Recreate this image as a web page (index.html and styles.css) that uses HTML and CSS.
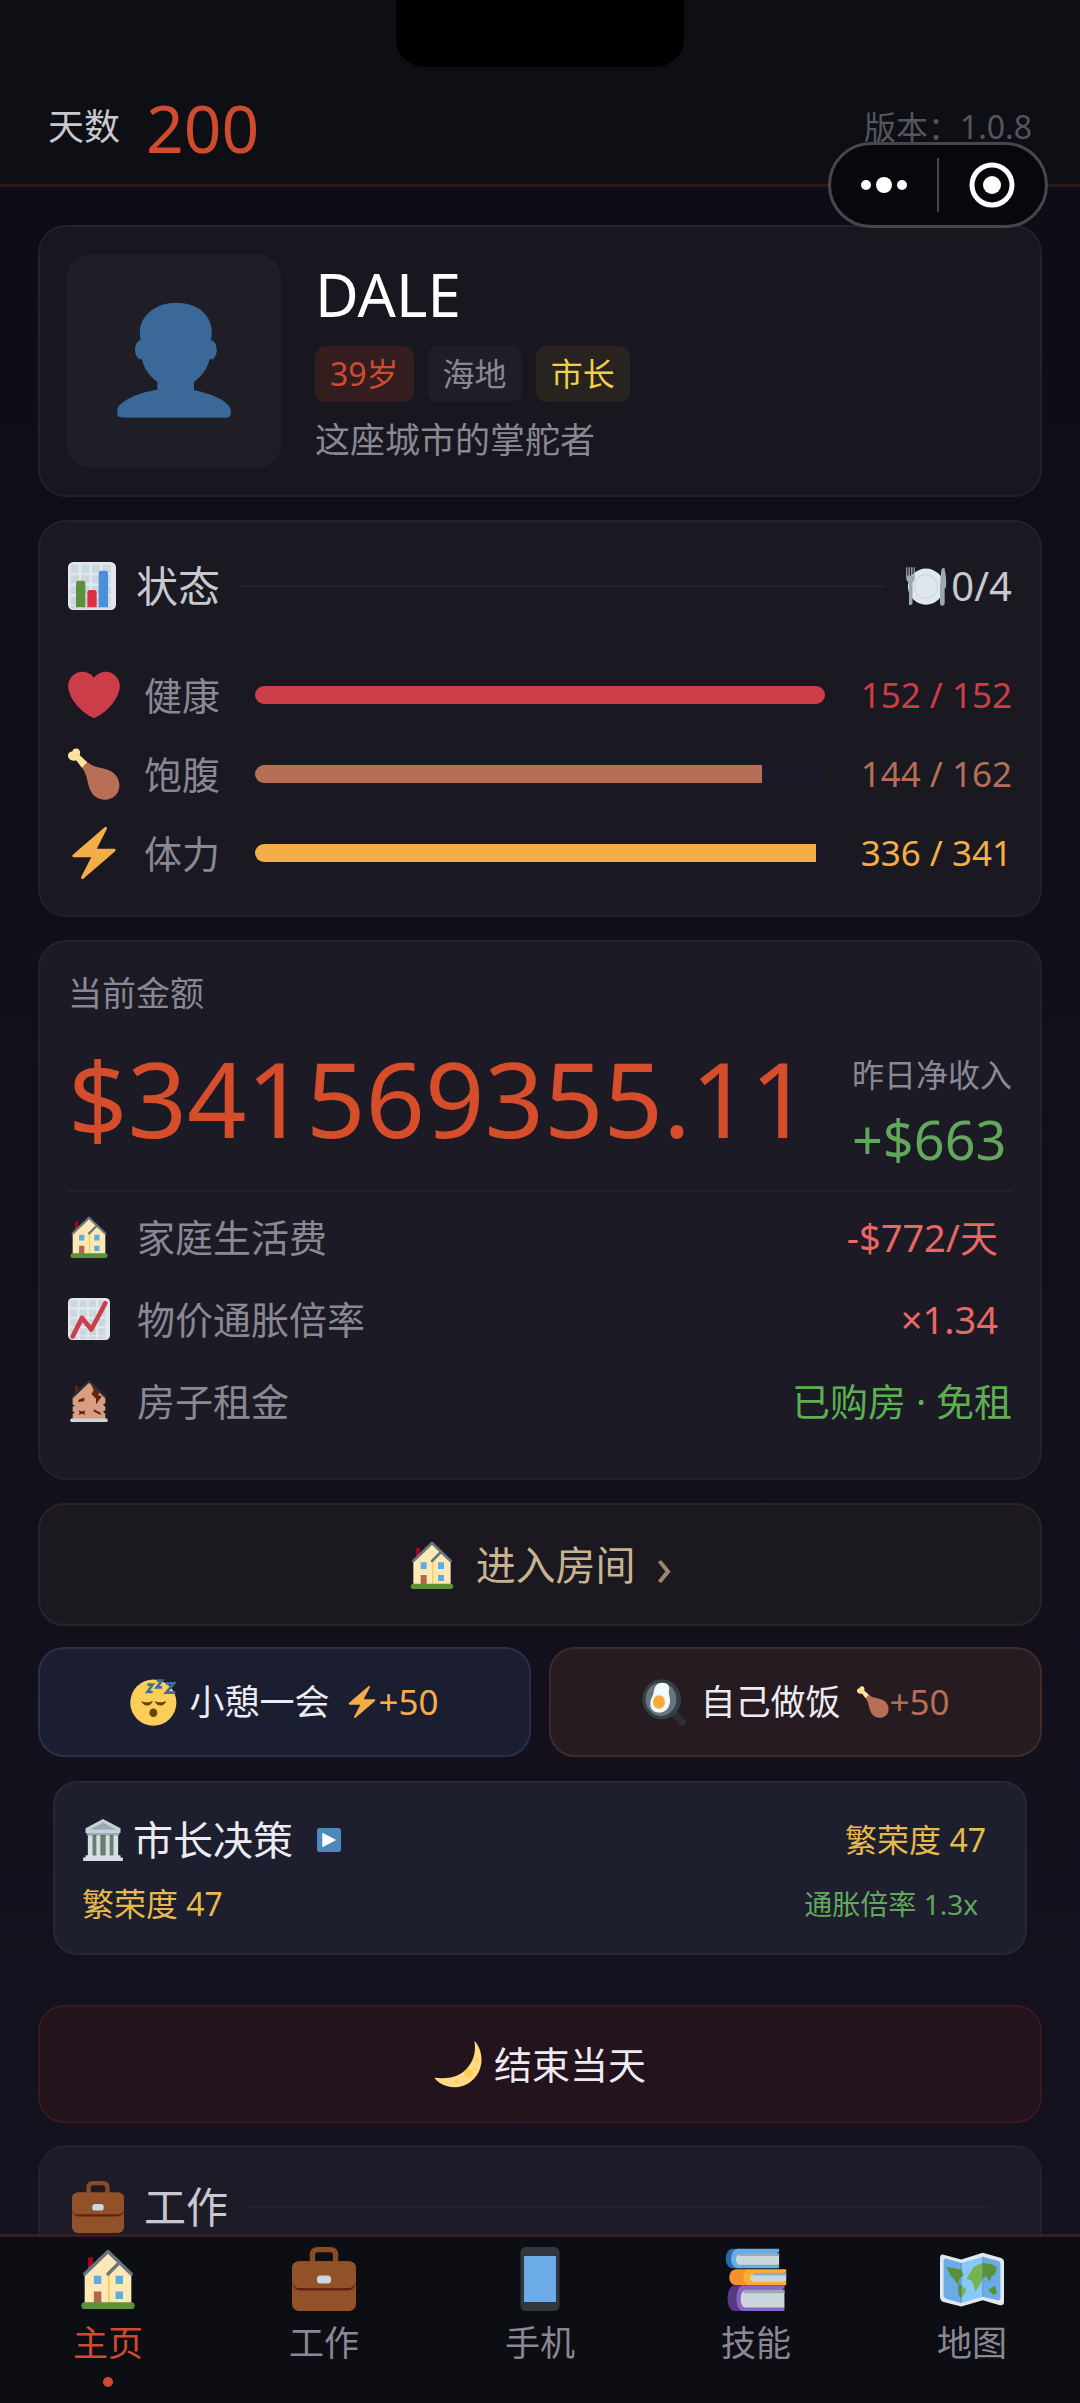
FILE: index.html
```
<!DOCTYPE html>
<html lang="zh-CN">
<head>
  <meta charset="UTF-8" />
  <meta name="viewport" content="width=device-width, initial-scale=1.0"/>
  <title>主页</title>
  <link rel="stylesheet" href="styles.css">
</head>
<body>
  <!-- shared icons -->
  <svg class="sprite" aria-hidden="true">
    <defs>
      <symbol id="i-user" viewBox="0 0 36 36">
        <path fill="#3a6898" d="M24 26.799v-2.566c2-1.348 4.08-3.779 4.703-6.896.186.103.206.17.413.17.991 0 1.709-1.287 1.709-2.873 0-1.562-.823-2.827-1.794-2.865.187-.674.293-1.577.293-2.735C29.324 5.168 26 .527 18.541.527c-6.629 0-10.777 4.641-10.777 8.507 0 1.123.069 2.043.188 2.755-.911.137-1.629 1.352-1.629 2.845 0 1.587.804 2.873 1.796 2.873.206 0 .025-.067.209-.17C8.952 20.453 11 22.885 13 24.232v2.414c-5 .645-12 3.437-12 6.23v1.061C1 35 2.076 35 3.137 35h29.725C33.924 35 35 35 35 33.938v-1.061c0-2.615-6-5.225-11-6.078z"/>
      </symbol>
      <symbol id="i-grid" viewBox="0 0 36 36">
        <rect width="36" height="36" rx="4" fill="#e1e8ed"/>
        <path stroke="#ccd6dd" stroke-width="6" stroke-dasharray="6 2" d="M2 5h32M2 13h32M2 21h32M2 29h32"/>
        <path stroke="#ccd6dd" stroke-width="2" stroke-dasharray="6 2" d="M2 34h32"/>
      </symbol>
      <symbol id="i-bars" viewBox="0 0 36 36">
        <use href="#i-grid"/>
        <path fill="#5c913b" d="M13 34H6V16a2 2 0 0 1 2-2h3a2 2 0 0 1 2 2z"/>
        <path fill="#dd2e44" d="M21.500 34h-7V23a2 2 0 0 1 2-2h3a2 2 0 0 1 2 2z"/>
        <path fill="#4a90d9" d="M30 34h-7V8.500a2 2 0 0 1 2-2h3a2 2 0 0 1 2 2z"/>
      </symbol>
      <symbol id="i-trend" viewBox="0 0 36 36">
        <use href="#i-grid"/>
        <path fill="none" stroke="#c9404c" stroke-width="4" stroke-linecap="round" stroke-linejoin="round" d="M4 33l8-16 8 10L32 4.500"/>
      </symbol>
      <symbol id="i-heart" viewBox="0 0 36 36">
        <path fill="#cb3e49" d="M35.885 11.833c0-5.450-4.418-9.868-9.867-9.868-3.308 0-6.227 1.633-8.018 4.129-1.791-2.496-4.710-4.129-8.017-4.129-5.450 0-9.868 4.417-9.868 9.868 0 .772.098 1.520.266 2.241C1.751 22.587 11.216 31.568 18 34.034c6.783-2.466 16.249-11.447 17.617-19.959.17-.721.268-1.469.268-2.242z"/>
      </symbol>
      <symbol id="i-leg" viewBox="0 0 36 36">
        <path fill="#b96f57" d="M9.500 13.500l3.500-4c4 3.500 9 4 13 5 7 2 10 7 9.500 12.500-.5 5.500-5 9-10.500 8.800-5.500-.3-9-4-10.500-9-1.200-4-1.500-9-5-13.300z"/>
        <path fill="#ffe1a0" d="M13.300 9.800l-3.700 3.900-4-5.300C3 9.500.2 8 0 5.600-.2 3.500 1.500 2.300 3 2.400 3.200.6 5 0 6.300.4c2.200.7 2.500 3 1.700 4.500z"/>
      </symbol>
      <symbol id="i-bolt" viewBox="0 0 36 36">
        <path fill="#f3ae48" d="M32.938 15.651C32.792 15.260 32.418 15 32 15H19.925L26.890 1.458c.219-.426.106-.947-.271-1.243C26.437.071 26.218 0 26 0c-.233 0-.466.082-.653.243L18 6.588 3.347 19.243c-.316.273-.43.714-.284 1.105S3.582 21 4 21h12.075L9.110 34.542c-.219.426-.106.947.271 1.243.182.144.401.215.619.215.233 0 .466-.082.653-.243L18 29.412l14.653-12.655c.317-.273.43-.714.285-1.106z"/>
      </symbol>
      <symbol id="i-plate" viewBox="0 0 36 36">
        <circle cx="18" cy="18.500" r="15.500" fill="#e1e8ed"/>
        <circle cx="18" cy="18.500" r="10" fill="none" stroke="#ccd6dd"/>
        <path fill="#99aab5" d="M1 2h1v7h1V2h1.200v7h1V2h1.200v7h1V2h1v9c0 2-1 3.500-2 4v18a2 2 0 0 1-3 1V15c-1.400-.5-2.400-2-2.400-4zM31 5c0-2 3-4 3-1.500C35 9 36 14 35 20h-1v13a2 2 0 0 1-4 0V18z"/>
      </symbol>
      <symbol id="i-house" viewBox="0 0 36 36">
        <path fill="#a0041e" d="M6 5h3v8H6z"/>
        <path fill="#ffe8b6" d="M4 15L18 1l14 14v18H4z"/>
        <path fill="#ffcc4d" d="M18 15h1v18h-1z"/>
        <path fill="none" stroke="#66757f" stroke-width="2" stroke-linecap="round" stroke-linejoin="round" d="M4 15L18 1.500 32 15M18 15l6-6"/>
        <path fill="#5dade2" d="M9.500 16H14v5H9.500zM22.500 16H27v5h-4.500zM22.500 25.500H27v4.500h-4.500z"/>
        <path fill="#b0664c" d="M9.500 25.500H14V33H9.500z"/>
        <rect x="2" y="32" width="32" height="4" rx="2" fill="#5c913b"/>
      </symbol>
      <symbol id="i-ruin" viewBox="0 0 36 36">
        <path fill="#662113" d="M6 5h3v8H6z"/>
        <path fill="#d99e82" d="M4 15L18 1l14 14v5l-2 1 2 2v3l-2 1 2 2v5H4v-5l2-1-2-1v-4l2-1-2-1z"/>
        <path fill="none" stroke="#292f33" stroke-width="2" d="M3.500 15L18 1l14.500 14"/>
        <path fill="#662113" d="M20 4l7 6-1 3 3 1-5 7v-5l-4-4 2-3zM9 17l5-2v3l-5 1zM22 25l6 3v2l-6-3zM9 26l3 1 3-1-1 2 1 2-3-1-3 1 1-2z"/>
        <rect x="2" y="33" width="32" height="3" rx="1" fill="#ccd6dd"/>
      </symbol>
      <symbol id="i-sleep" viewBox="0 0 36 36">
        <circle cx="17.500" cy="18.500" r="17.300" fill="#fbce5a"/>
        <path fill="#664500" d="M8.500 17c2 1.500 6 1.500 8.500 0-.5 4.500-7.500 5-8.500 0zM18.500 17c2 1.500 6 1.500 8.500 0-.5 4.500-7.500 5-8.500 0z"/>
        <ellipse cx="17.500" cy="26" rx="3" ry="3.200" fill="#664500"/>
        <g fill="none" stroke="#3b6fa3" stroke-width="2">
          <path d="M13 5h4l-4 5.500h4M20 2h4l-4 5h4M27 4h6l-6 7h7"/>
        </g>
      </symbol>
      <symbol id="i-pan" viewBox="0 0 36 36">
        <path stroke="#292f33" stroke-width="5.500" stroke-linecap="round" d="M24 26l7 7"/>
        <ellipse cx="15.500" cy="16" rx="14.500" ry="15" fill="#343f46"/>
        <ellipse cx="15" cy="16" rx="11.500" ry="12.500" fill="#66757f"/>
        <path fill="#f5f8fa" d="M16 3.500c4 0 6 2.500 5 6-.7 3 1 4 .8 8-.3 5-3.500 8.500-7.800 8.500-4.500 0-7.500-3-7-7.500.3-3 2-4.500 2.500-8 .5-4 2.500-7 6.500-7z"/>
        <ellipse cx="13.500" cy="18" rx="4.500" ry="5" fill="#f4a93a"/>
      </symbol>
      <symbol id="i-bank" viewBox="0 0 36 36">
        <path fill="#c5d0d8" d="M18 0l15 8v4H3V8z"/>
        <path fill="#99aab5" d="M18 3l11 6H7zM4 12h28v2H4z"/>
        <path fill="#6b7d6f" d="M6 14h24v17H6z"/>
        <path fill="#d6dfe5" d="M5 14h4v17H5zM12.300 14h3.400v17h-3.400zM20.300 14h3.400v17h-3.400zM27 14h4v17h-4zM3 31h30v2H3zM1 33h34v3H1z"/>
      </symbol>
      <symbol id="i-play" viewBox="0 0 36 36">
        <rect width="36" height="36" rx="4" fill="#4f88bd"/>
        <path fill="#fff" d="M8 7l21 11L8 29z"/>
      </symbol>
      <symbol id="i-moon" viewBox="0 0 36 36">
        <path fill="#ffd983" d="M30.300.5c5.300 5.600 7.200 15.500 3.200 23.500C29 33 19 37.500 10 34.700 5.500 33.300 2 31 .2 28.300c9.800 1.200 18.800-.3 24.800-7.300 5.200-6 6.500-13 5.300-20.500z"/>
        <g fill="#ffcc4d"><circle cx="26" cy="25" r="3"/><circle cx="32" cy="15" r="1.500"/><circle cx="17" cy="31" r="1.500"/><circle cx="31" cy="22" r="1"/></g>
      </symbol>
      <symbol id="i-case" viewBox="0 0 36 36">
        <path fill="none" stroke="#8a4b23" stroke-width="3" d="M11.500 9V4.500c0-2 1-3 3-3h7c2 0 3 1 3 3V9"/>
        <rect y="8" width="36" height="28" rx="4" fill="#915129"/>
        <path fill="#662113" d="M0 19.500C0 22.500 2 24.500 5 24.500h26c3 0 5-2 5-5V18H0z"/>
        <path fill="#915129" d="M4 8h28a4 4 0 0 1 4 4v7c0 2.500-2 4-4 4H4c-2.500 0-4-1.500-4-4v-7a4 4 0 0 1 4-4z"/>
        <rect x="14" y="16" width="8" height="4.500" rx="2" fill="#ccd6dd"/>
      </symbol>
      <symbol id="i-phone" viewBox="0 0 36 36">
        <rect x="7" width="22" height="36" rx="3" fill="#31373d"/>
        <path fill="#6aabe8" d="M9 5h18v26H9z"/>
      </symbol>
      <symbol id="i-books" viewBox="0 0 36 36">
        <path fill="#2a6aa8" d="M5 1h4v11H5C2.500 12 1 9.500 1 6.500S2.500 1 5 1z"/>
        <path fill="#65aeea" d="M8 1h23v2h-1v7h1v2H8c-2.500 0-4-2.500-4-5.500S5.500 1 8 1z"/>
        <path fill="#ccd6dd" d="M9 4h22v6H9c-3 0-3-6 0-6z"/>
        <path fill="#9aaab4" d="M9 3.500h22V5H8z"/>
        <path fill="#f4912d" d="M7 12.500h7v9H7c-2.500 0-4-2-4-4.500s1.500-4.500 4-4.500z"/>
        <path fill="#ffac33" d="M14 12.500h21v2h-1v5h1v2H14c-4 0-4-9 0-9z"/>
        <path fill="#ccd6dd" d="M17 15h18v4.500H17c-3 0-3-4.500 0-4.500z"/>
        <path fill="#9aaab4" d="M17 14.500h18V16H16z"/>
        <path fill="#553788" d="M6 21.500h5V36H6c-2.500 0-4-3-4-7s1.500-7.500 4-7.500z"/>
        <path fill="#8864c0" d="M11 21.500h23v2h-1v10h1V36H11c-2.500 0-4-3-4-7s1.500-7.500 4-7.500z"/>
        <path fill="#ccd6dd" d="M12 24.500h22V34H12c-3.500 0-3.500-9.500 0-9.500z"/>
        <path fill="#9aaab4" d="M12 24h22v2H11z"/>
      </symbol>
      <symbol id="i-map" viewBox="0 0 36 36">
        <path fill="#e1e8ed" d="M0 6c0-1.500 1-2 2-1.700L12 7l12-3.700L34 6c1.500.5 2 1.200 2 2.500V31c0 1.500-1 2-2.200 1.700L24 30l-12 3.500L2 31c-1.400-.6-2-1.500-2-3z"/>
        <path fill="#6aabe8" d="M2 8c0-1.200.6-1.700 1.700-1.400L12 9v22.500l-8.300-2.300C2.500 28.800 2 28 2 27zM24 5.500l8.500 2.300c1 .3 1.500.9 1.500 1.900v19c0 1-.6 1.500-1.600 1.200L24 28z"/>
        <path fill="#88c9f9" d="M12 9l12-3.500V28l-12 3.500z"/>
        <path fill="#5c913b" d="M3.500 11c3 1 5 .5 8.500 2l1.500 3-2 1-1 3 1.500 2-2-1-4-5zM10 22l2-.5V29l-1.500-2zM24 9l5 .5 3 2-1 4-2 1-1 3-2-3-2 1zM27 24l4-2 1 4-2 1z"/>
        <path fill="#77b255" d="M12 13.500l1.500 2.500-1.500 1zM12 21.500l3 2.500-3 5zM16 16l3-5 5-2v9l-2 4-2 3-2-6-3-1z"/>
        <path stroke="#3c6b90" stroke-width=".3" d="M12 9v22.500M24 5.500V28"/>
      </symbol>
    </defs>
  </svg>

  <div class="notch"></div>

  <div class="capsule">
    <button class="capsule-btn" aria-label="更多">
      <svg class="dots" viewBox="0 0 48 18"><g fill="#fff"><circle cx="6" cy="9" r="5"/><circle cx="24" cy="9" r="8"/><circle cx="42" cy="9" r="5"/></g></svg>
    </button>
    <button class="capsule-btn" aria-label="关闭">
      <svg class="ring" viewBox="0 0 46 46"><circle cx="23" cy="23" r="20" fill="none" stroke="#fff" stroke-width="5"/><circle cx="23" cy="23" r="9" fill="#fff"/></svg>
    </button>
  </div>

  <div class="app">
    <header class="topbar">
      <div class="days">天数 <span class="days-num">200</span></div>
      <div class="version">版本：1.0.8</div>
    </header>

    <main class="content">
      <section class="card profile">
        <div class="avatar"><svg class="avatar-icon"><use href="#i-user"/></svg></div>
        <div class="info">
          <h1 class="name">DALE</h1>
          <div class="tags">
            <span class="tag tag-age">39岁</span>
            <span class="tag">海地</span>
            <span class="tag tag-job">市长</span>
          </div>
          <p class="desc">这座城市的掌舵者</p>
        </div>
      </section>

      <section class="card status">
        <div class="card-head">
          <svg class="icon-lg"><use href="#i-bars"/></svg>
          <h2>状态</h2>
          <span class="rule"></span>
          <span class="meals"><svg class="icon-md"><use href="#i-plate"/></svg>0/4</span>
        </div>
        <div class="stat health">
          <svg class="icon-xl"><use href="#i-heart"/></svg>
          <span class="stat-name">健康</span>
          <div class="track"><div class="fill" style="width:100%"></div></div>
          <span class="stat-val">152 / 152</span>
        </div>
        <div class="stat food">
          <svg class="icon-xl"><use href="#i-leg"/></svg>
          <span class="stat-name">饱腹</span>
          <div class="track"><div class="fill" style="width:89%"></div></div>
          <span class="stat-val">144 / 162</span>
        </div>
        <div class="stat energy">
          <svg class="icon-xl"><use href="#i-bolt"/></svg>
          <span class="stat-name">体力</span>
          <div class="track"><div class="fill" style="width:98.5%"></div></div>
          <span class="stat-val">336 / 341</span>
        </div>
      </section>

      <section class="card money">
        <div class="money-label">当前金额</div>
        <div class="money-main">
          <div class="amount">$341569355.11</div>
          <div class="income">
            <div class="income-label">昨日净收入</div>
            <div class="income-val">+$663</div>
          </div>
        </div>
        <div class="costs">
          <div class="cost">
            <svg class="icon-md"><use href="#i-house"/></svg>
            <span class="cost-name">家庭生活费</span>
            <span class="cost-val loss">-$772/天</span>
          </div>
          <div class="cost">
            <svg class="icon-md"><use href="#i-trend"/></svg>
            <span class="cost-name">物价通胀倍率</span>
            <span class="cost-val loss">×1.34</span>
          </div>
          <div class="cost">
            <svg class="icon-md"><use href="#i-ruin"/></svg>
            <span class="cost-name">房子租金</span>
            <span class="cost-val free">已购房 · 免租</span>
          </div>
        </div>
      </section>

      <button class="btn room">
        <svg class="icon-lg"><use href="#i-house"/></svg>
        <span>进入房间</span>
        <span class="arrow">›</span>
      </button>

      <div class="pair">
        <button class="btn nap">
          <svg class="icon-lg"><use href="#i-sleep"/></svg>
          <span>小憩一会</span>
          <span class="gain"><svg class="icon-sm"><use href="#i-bolt"/></svg>+50</span>
        </button>
        <button class="btn cook">
          <svg class="icon-lg"><use href="#i-pan"/></svg>
          <span>自己做饭</span>
          <span class="gain"><svg class="icon-sm"><use href="#i-leg"/></svg>+50</span>
        </button>
      </div>

      <section class="mayor">
        <div class="mayor-row">
          <svg class="icon-md"><use href="#i-bank"/></svg>
          <h2>市长决策</h2>
          <button class="expand" aria-label="展开"><svg class="icon-xs"><use href="#i-play"/></svg></button>
          <span class="boom push">繁荣度 47</span>
        </div>
        <div class="mayor-row">
          <span class="boom">繁荣度 47</span>
          <span class="rate push">通胀倍率 1.3x</span>
        </div>
      </section>

      <button class="btn end-day">
        <svg class="icon-lg"><use href="#i-moon"/></svg>
        <span>结束当天</span>
      </button>

      <section class="card work">
        <div class="card-head">
          <svg class="icon-xl"><use href="#i-case"/></svg>
          <h2>工作</h2>
          <span class="rule"></span>
        </div>
      </section>
    </main>

    <nav class="tabbar">
      <a class="tab active" href="#home"><svg class="tab-icon tab-house"><use href="#i-house"/></svg>主页</a>
      <a class="tab" href="#work"><svg class="tab-icon"><use href="#i-case"/></svg>工作</a>
      <a class="tab" href="#phone"><svg class="tab-icon"><use href="#i-phone"/></svg>手机</a>
      <a class="tab" href="#skills"><svg class="tab-icon"><use href="#i-books"/></svg>技能</a>
      <a class="tab" href="#map"><svg class="tab-icon"><use href="#i-map"/></svg>地图</a>
    </nav>
  </div>
</body>
</html>
```
FILE: styles.css
```
:root {
  --accent: #d04b2e;
  --muted: #8a8894;
  --text: #ecebf2;
  --line: #23212c;
  --gold: #e6b94d;
  --green: #62a85c;
}
* {
  box-sizing: border-box;
}
body {
  margin: 0;
  background: #0e0f14;
  color: var(--text);
  font-family: "Noto Sans", "Noto Sans CJK SC", sans-serif;
  font-size: 38px;
  line-height: 48px;
}
h1, h2, p {
  margin: 0;
  font-weight: 400;
}
h2 {
  font-size: 40px;
}
button {
  font: inherit;
  color: inherit;
  background: none;
  border: 0;
  padding: 0;
  cursor: pointer;
}
svg {
  display: block;
  flex: none;
}
.sprite {
  position: absolute;
  width: 0;
  height: 0;
}
.icon-xs { width: 24px; height: 24px; }
.icon-sm { width: 32px; height: 32px; }
.icon-md { width: 42px; height: 42px; }
.icon-lg { width: 48px; height: 48px; }
.icon-xl { width: 52px; height: 52px; }

.app {
  display: flex;
  flex-direction: column;
  height: 100vh;
}

/* device overlays */
.notch {
  position: absolute;
  top: 0;
  left: 50%;
  width: 288px;
  height: 67px;
  margin-left: -144px;
  background: #000;
  border-radius: 0 0 28px 28px;
}
.capsule {
  position: absolute;
  top: 142px;
  right: 32px;
  z-index: 2;
  display: flex;
  align-items: center;
  width: 220px;
  height: 86px;
  background: #08070c;
  border: 3px solid #47464b;
  border-radius: 43px;
}
.capsule-btn {
  flex: 1;
  display: flex;
  justify-content: center;
  align-items: center;
  height: 54px;
}
.capsule-btn + .capsule-btn {
  border-left: 2px solid #47464b;
}
.dots { width: 48px; height: 18px; }
.ring { width: 46px; height: 46px; }

.topbar {
  flex: none;
  display: flex;
  justify-content: space-between;
  align-items: center;
  padding: 70px 48px 0;
  height: 187px;
  border-bottom: 3px solid #2b1818;
}
.days {
  display: flex;
  align-items: center;
  gap: 26px;
  font-size: 36px;
  color: #c9c8ce;
}
.days-num {
  font-size: 66px;
  color: var(--accent);
}
.version {
  font-size: 32px;
  color: #55545f;
}

.content {
  flex: 1;
  min-height: 0;
  overflow-y: auto;
  scrollbar-width: none;
  padding: 38px 38px 0;
  background: linear-gradient(#0e0c16, #15121f);
}
.card {
  margin-bottom: 23px;
  padding: 28px;
  background: #1a1821;
  border: 2px solid var(--line);
  border-radius: 28px;
}
.card-head {
  display: flex;
  align-items: center;
  gap: 20px;
  height: 72px;
  color: #c9c8ce;
}
.card-head h2 {
  font-size: 42px;
}
.rule {
  flex: 1;
  height: 2px;
  background: var(--line);
}

/* profile */
.profile {
  display: flex;
  align-items: center;
  gap: 34px;
  padding: 27px;
  background: #18171f;
}
.avatar {
  display: flex;
  justify-content: center;
  align-items: center;
  width: 214px;
  height: 214px;
  background: #1f1e26;
  border-radius: 24px;
}
.avatar-icon {
  width: 120px;
  height: 120px;
}
.name {
  font-size: 60px;
  line-height: 72px;
  color: #fff;
}
.tags {
  display: flex;
  gap: 14px;
  margin: 16px 0 14px;
}
.tag {
  padding: 4px 15px;
  font-size: 32px;
  color: var(--muted);
  background: #1f1e26;
  border-radius: 10px;
}
.tag-age {
  color: var(--accent);
  background: #331d1f;
}
.tag-job {
  color: #ecd24c;
  background: #29231f;
}
.desc {
  font-size: 35px;
  color: var(--muted);
}

/* status */
.status {
  padding-bottom: 23px;
}
.status .card-head {
  margin-bottom: 33px;
}
.meals {
  display: flex;
  align-items: center;
  gap: 4px;
  font-size: 40px;
}
.stat {
  display: flex;
  align-items: center;
  height: 79px;
}
.stat-name {
  width: 111px;
  margin-left: 24px;
  color: var(--muted);
}
.track {
  flex: 1;
  height: 18px;
  background: #1c1a2a;
  border-radius: 9px;
  overflow: hidden;
}
.fill {
  height: 100%;
}
.stat-val {
  width: 187px;
  font-size: 35px;
  text-align: right;
}
.health { color: #cb3e49; }
.food { color: #b46f56; }
.energy { color: #f3ae48; }
.stat .fill {
  background: currentColor;
}

/* money */
.money {
  background: #1c1a24;
}
.money-label {
  font-size: 34px;
  line-height: 46px;
  color: var(--muted);
}
.money-main {
  display: flex;
  justify-content: space-between;
  align-items: center;
  height: 176px;
  border-bottom: 2px solid var(--line);
}
.amount {
  padding-bottom: 10px;
  font-size: 104px;
  line-height: 120px;
  color: #d64d2c;
}
.income {
  padding-top: 24px;
}
.income-label {
  font-size: 32px;
  color: var(--muted);
}
.income-val {
  font-size: 54px;
  line-height: 80px;
  color: var(--green);
}
.costs {
  padding: 4px 0 8px;
}
.cost {
  display: flex;
  align-items: center;
  gap: 27px;
  height: 82px;
}
.cost-name {
  color: var(--muted);
}
.cost-val {
  margin-left: auto;
}
.loss {
  padding-right: 14px;
  color: #e96863;
}
.free {
  color: #5cb052;
}

/* actions */
.btn {
  display: flex;
  justify-content: center;
  align-items: center;
  width: 100%;
  border: 2px solid var(--line);
  border-radius: 26px;
}
.room {
  gap: 20px;
  height: 123px;
  font-size: 40px;
  color: #c8b391;
  background: #1c1820;
  border-color: #2a2425;
}
.arrow {
  font-size: 54px;
  color: #99886f;
}
.pair {
  display: flex;
  gap: 18px;
  margin: 21px 0 24px;
}
.pair .btn {
  gap: 11px;
  height: 110px;
  font-size: 35px;
}
.nap {
  background: #1b1d30;
  border-color: #2a304b;
}
.cook {
  background: #251b20;
  border-color: #402b28;
}
.gain {
  display: flex;
  align-items: center;
  margin-left: 6px;
  color: #f3ae48;
}
.cook .gain {
  color: #b46f56;
}
.mayor {
  margin: 0 15px 50px;
  padding: 25px 27px 17px;
  background: #1d1e2e;
  border: 2px solid #28273a;
  border-radius: 24px;
}
.mayor-row {
  display: flex;
  align-items: center;
  height: 64px;
}
.mayor-row h2 {
  margin: 0 24px 0 9px;
}
.push {
  margin-left: auto;
}
.boom {
  padding-right: 12px;
  font-size: 32px;
  color: var(--gold);
}
.rate {
  padding-right: 20px;
  font-size: 28px;
  color: var(--green);
}
.end-day {
  gap: 12px;
  height: 118px;
  margin-bottom: 22px;
  background: #23131c;
  border-color: #3b181e;
}
.work {
  margin-bottom: 0;
  padding: 24px 52px 60px 32px;
  background: #1e1b29;
}

/* bottom tabs */
.tabbar {
  flex: none;
  display: flex;
  height: 169px;
  background: #0d0e13;
  border-top: 3px solid #351f22;
}
.tab {
  position: relative;
  flex: 1;
  display: flex;
  flex-direction: column;
  align-items: center;
  gap: 8px;
  padding-top: 10px;
  font-size: 35px;
  color: var(--muted);
  text-decoration: none;
}
.tab-icon {
  width: 64px;
  height: 64px;
}
.tab-house {
  padding: 2px;
}
.tab.active {
  color: var(--accent);
}
.tab.active::after {
  content: "";
  position: absolute;
  bottom: 16px;
  width: 10px;
  height: 10px;
  border-radius: 50%;
  background: var(--accent);
}
```
